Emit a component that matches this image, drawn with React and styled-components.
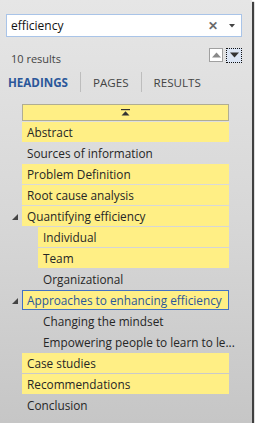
import React from "react";
import styled, { createGlobalStyle } from "styled-components";

const GlobalStyle = createGlobalStyle`
  html, body {
    margin: 0;
    padding: 0;
    background: #ffffff;
  }
  body {
    font-family: "Segoe UI", "Open Sans", "Noto Sans", sans-serif;
  }
`;

const headings = [
  { text: "Abstract", level: 1, hit: true },
  { text: "Sources of information", level: 1 },
  { text: "Problem Definition", level: 1, hit: true },
  { text: "Root cause analysis", level: 1, hit: true },
  { text: "Quantifying efficiency", level: 1, hit: true, open: true },
  { text: "Individual", level: 2, hit: true },
  { text: "Team", level: 2, hit: true },
  { text: "Organizational", level: 2 },
  { text: "Approaches to enhancing efficiency", level: 1, hit: true, open: true, current: true },
  { text: "Changing the mindset", level: 2 },
  { text: "Empowering people to learn to le...", level: 2 },
  { text: "Case studies", level: 1, hit: true },
  { text: "Recommendations", level: 1, hit: true },
  { text: "Conclusion", level: 1 },
];

const App = () => {
  return (
    <>
      <GlobalStyle />
      <Pane>
        <SearchBox>
          <SearchText>efficiency</SearchText>
          <ClearIcon>✕</ClearIcon>
          <DropIcon viewBox="0 0 6 4">
            <polygon points="0,0 6,0 3,3.5" fill="#444" />
          </DropIcon>
        </SearchBox>

        <ResultsBar>
          <ResultCount>10 results</ResultCount>
          <NavButtons>
            <NavButton>
              <svg width="9" height="6" viewBox="0 0 9 6">
                <polygon points="0,5.5 9,5.5 4.5,0.5" fill="#8a8a8a" />
              </svg>
            </NavButton>
            <NavButton active>
              <svg width="9" height="6" viewBox="0 0 9 6">
                <polygon points="0,0.5 9,0.5 4.5,5.5" fill="#333" />
              </svg>
            </NavButton>
          </NavButtons>
        </ResultsBar>

        <Tabs>
          <Tab active>HEADINGS</Tab>
          <TabDivider />
          <Tab>PAGES</Tab>
          <TabDivider />
          <Tab>RESULTS</Tab>
        </Tabs>

        <Tree>
          <CollapseAll>
            <svg width="9" height="7" viewBox="0 0 9 7">
              <rect x="0" y="0" width="9" height="1.2" fill="#333" />
              <polygon points="0.5,6.5 8.5,6.5 4.5,2.2" fill="#333" />
            </svg>
          </CollapseAll>
          {headings.map((h) => (
            <Row key={h.text} level={h.level}>
              <Toggle>
                {h.open && (
                  <svg width="6" height="6" viewBox="0 0 6 6">
                    <polygon points="6,0 6,6 0,6" fill="#444" />
                  </svg>
                )}
              </Toggle>
              <Heading hit={h.hit} current={h.current}>
                {h.text}
              </Heading>
            </Row>
          ))}
        </Tree>
      </Pane>
    </>
  );
};

const Pane = styled.div`
  box-sizing: border-box;
  width: 252px;
  height: 423px;
  padding: 14px 0 0 6px;
  background: linear-gradient(to bottom, #e6e6e6 0%, #d6d6d6 55%, #c6c6c6 100%);
  box-shadow: 2px 2px 1px rgba(0, 0, 0, 0.75);
  overflow: hidden;
`;

const SearchBox = styled.div`
  box-sizing: border-box;
  width: 236px;
  height: 23px;
  display: flex;
  align-items: center;
  padding: 0 6px 0 4px;
  background: #ffffff;
  border: 1px solid #a9c4e8;
`;

const SearchText = styled.span`
  flex: 1;
  font-size: 12px;
  color: #111;
`;

const ClearIcon = styled.span`
  font-size: 12px;
  font-weight: 700;
  color: #6a6a6a;
  margin-right: 11px;
`;

const DropIcon = styled.svg`
  width: 6px;
  height: 4px;
`;

const ResultsBar = styled.div`
  width: 236px;
  display: flex;
  align-items: center;
  justify-content: space-between;
  margin-top: 10px;
  height: 16px;
`;

const ResultCount = styled.span`
  font-size: 11px;
  color: #444;
  padding-left: 5px;
  margin-top: 6px;
`;

const NavButtons = styled.div`
  display: flex;
  align-items: center;
  gap: 3px;
`;

const NavButton = styled.div`
  box-sizing: border-box;
  width: ${({ active }) => (active ? "16px" : "14px")};
  height: ${({ active }) => (active ? "15px" : "14px")};
  display: flex;
  align-items: center;
  justify-content: center;
  background: ${({ active }) => (active ? "#dbe5f4" : "#ffffff")};
  border: 1px ${({ active }) => (active ? "dotted #111" : "solid #a0a0a0")};
`;

const Tabs = styled.div`
  display: flex;
  align-items: center;
  height: 20px;
  margin-top: 9px;
  padding-left: 2px;
`;

const Tab = styled.span`
  font-size: 11.6px;
  font-weight: ${({ active }) => (active ? 700 : 400)};
  color: ${({ active }) => (active ? "#2b579a" : "#444")};
`;

const TabDivider = styled.span`
  width: 1px;
  height: 20px;
  background: #bdbdbd;
  margin: 0 12px;
`;

const Tree = styled.div`
  margin-top: 12px;
  padding-left: 16px;
  width: 207px;
`;

const CollapseAll = styled.div`
  box-sizing: border-box;
  height: 17px;
  display: flex;
  align-items: center;
  justify-content: center;
  background: #ffef85;
  border: 1px solid #b0ad93;
  margin-bottom: 1px;
`;

const Row = styled.div`
  position: relative;
  height: 20px;
  margin-bottom: 1px;
  padding-left: ${({ level }) => (level - 1) * 16}px;
`;

const Toggle = styled.span`
  position: absolute;
  left: -10px;
  top: 8px;
  display: flex;
`;

const Heading = styled.div`
  box-sizing: border-box;
  height: 20px;
  display: flex;
  align-items: center;
  font-size: 11.8px;
  white-space: nowrap;
  color: ${({ current }) => (current ? "#2b579a" : "#262626")};
  background: ${({ hit }) => (hit ? "#ffef85" : "transparent")};
  border: ${({ current }) => (current ? "1px solid #4472c4" : "none")};
  padding-left: ${({ current }) => (current ? "4px" : "5px")};
`;

export default App;
